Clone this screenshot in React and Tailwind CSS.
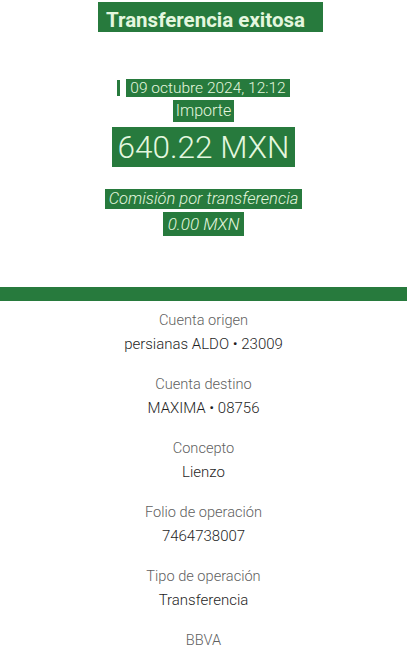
export default function App() {
  const rows = [
    ["Cuenta origen", "persianas ALDO • 23009"],
    ["Cuenta destino", "MAXIMA • 08756"],
    ["Concepto", "Lienzo"],
    ["Folio de operación", "7464738007"],
    ["Tipo de operación", "Transferencia"],
    ["BBVA", ""],
  ];
  return (
    <div className="w-[407px] h-[661px] bg-white overflow-hidden" style={{ fontFamily: "Roboto, 'Liberation Sans', sans-serif" }}>
      <div className="flex flex-col items-center">
        <div className="shrink-0 mt-[2px] ml-[14px] h-[30px] pl-[8px] pr-[18px] bg-[#277a3d] text-[#e4f7df] text-[20.5px] font-bold leading-[30px] pt-[3px]">Transferencia exitosa</div>
        <div className="shrink-0 mt-[47px] flex items-center gap-[6px]">
          <div className="w-[3px] h-[16px] bg-[#277a3d]"></div>
          <div className="h-[18px] px-[4px] bg-[#277a3d] text-[#e4f7df] text-[15.5px] font-light leading-[18px]">09 octubre 2024, 12:12</div>
        </div>
        <div className="shrink-0 mt-[3px] h-[22px] px-[3px] bg-[#277a3d] text-[#e4f7df] text-[16px] font-light leading-[22px]">Importe</div>
        <div className="shrink-0 mt-[5px] h-[40px] px-[6px] bg-[#277a3d] text-[#e4f7df] text-[31.5px] font-light leading-[42px]">640.22 MXN</div>
        <div className="shrink-0 mt-[22px] h-[20px] px-[4px] bg-[#277a3d] text-[#e4f7df] text-[16.5px] font-light italic leading-[20px]">Comisión por transferencia</div>
        <div className="shrink-0 mt-[3px] h-[24px] px-[5px] bg-[#277a3d] text-[#e4f7df] text-[17px] font-light italic leading-[24px]">0.00 MXN</div>
        <div className="shrink-0 mt-[51px] w-full h-[14px] bg-[#277a3d]"></div>
        <div className="shrink-0 mt-[9px] flex flex-col items-center w-full">
          {rows.map(([l, v], i) => (
            <div key={i} className="shrink-0 h-[64px] flex flex-col items-center">
              <div className="text-[14.6px] font-light text-[#5f5f5f] leading-[20px]">{l}</div>
              {v && <div className="mt-[4px] text-[15px] font-light text-[#1f1f1f] leading-[20px]">{v}</div>}
            </div>
          ))}
        </div>
      </div>
    </div>
  );
}
